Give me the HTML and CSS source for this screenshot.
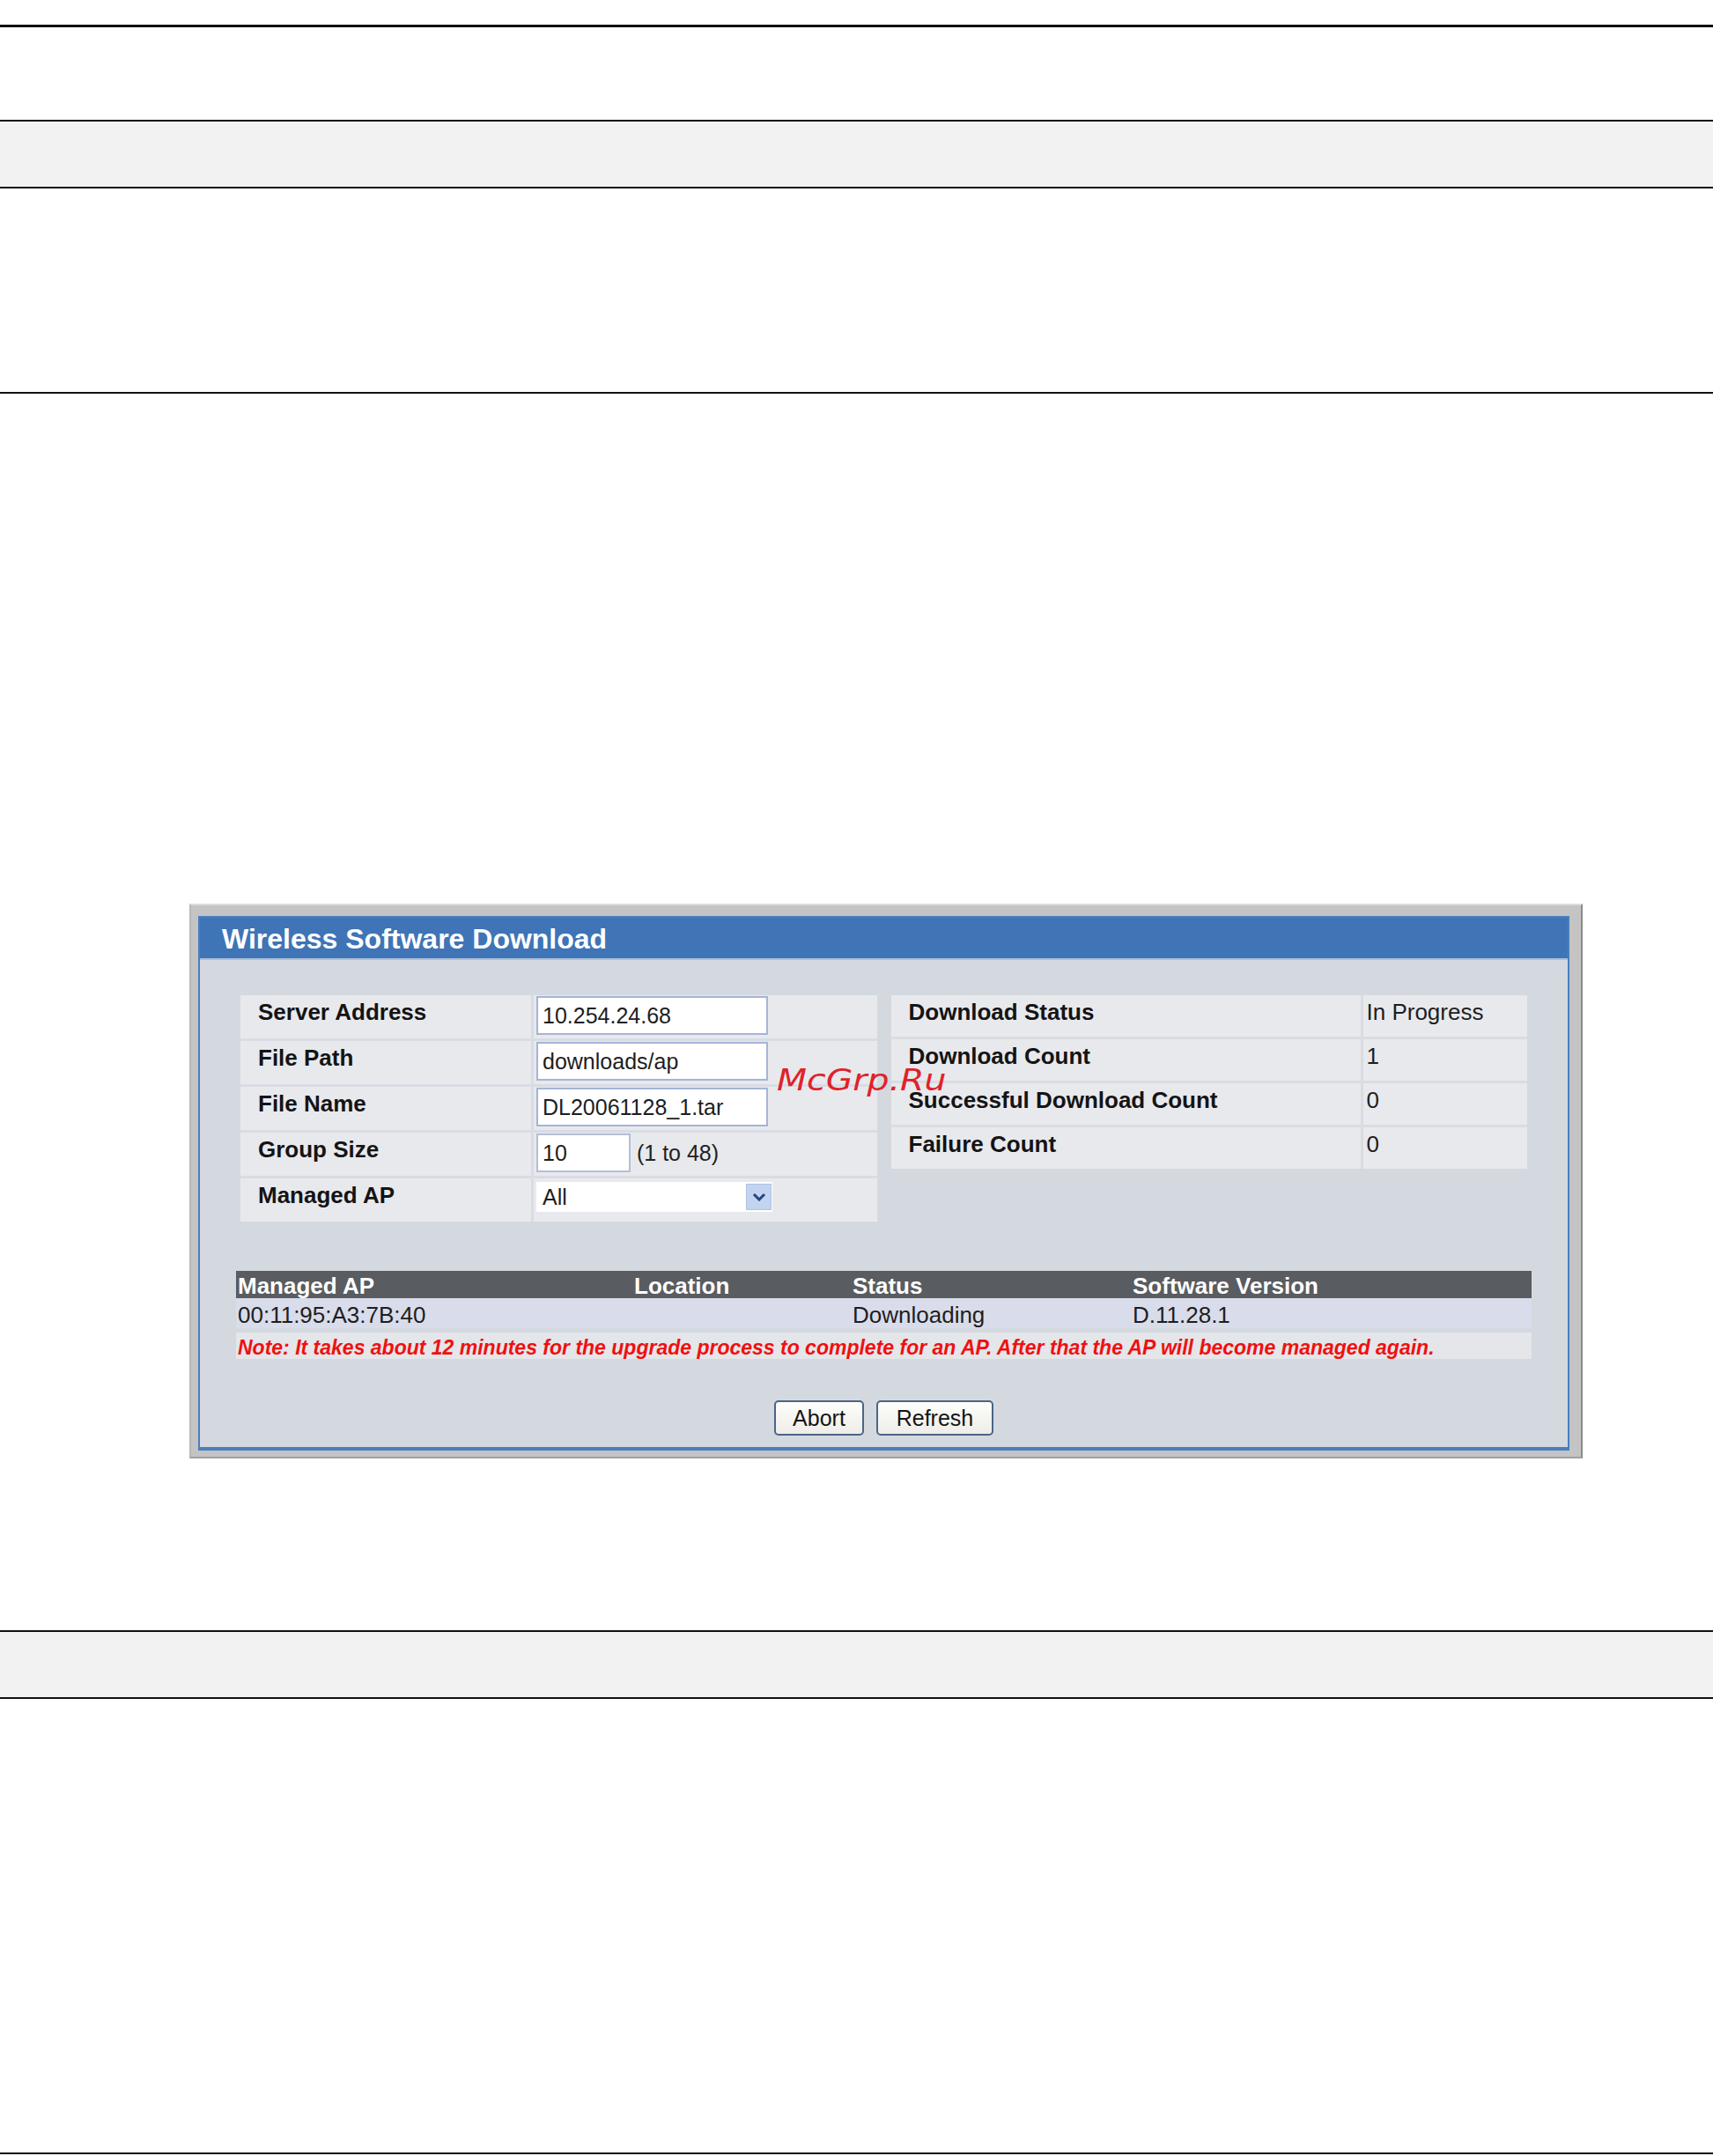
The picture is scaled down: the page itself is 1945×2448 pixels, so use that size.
FILE: index.html
```html
<!DOCTYPE html>
<html>
<head>
<meta charset="utf-8">
<title>Wireless Software Download</title>
<link rel="stylesheet" href="styles.css">
</head>
<body>
<div class="page">
  <div class="rule-thick"></div>
  <div class="band band-top"></div>
  <div class="rule rule-a"></div>

  <div class="figure">
    <div class="frame">
      <div class="panel">
        <div class="panel-head">Wireless Software Download</div>
        <div class="panel-body">
          <div class="top">
            <div class="kv kv-left">
              <div class="lbl">Server Address</div>
              <div class="val"><input class="txt" type="text" value="10.254.24.68"></div>
              <div class="lbl">File Path</div>
              <div class="val"><input class="txt" type="text" value="downloads/ap"></div>
              <div class="lbl">File Name</div>
              <div class="val"><input class="txt" type="text" value="DL20061128_1.tar"></div>
              <div class="lbl">Group Size</div>
              <div class="val val-row"><input class="txt txt-small" type="text" value="10"><span class="hint">(1 to 48)</span></div>
              <div class="lbl">Managed AP</div>
              <div class="val">
                <div class="select">
                  <span class="select-text">All</span>
                  <span class="select-btn"><svg width="16" height="10" viewBox="0 0 16 10"><polyline points="2,2 8,8 14,2" fill="none" stroke="#25457f" stroke-width="3"/></svg></span>
                </div>
              </div>
            </div>
            <div class="kv kv-right">
              <div class="lbl">Download Status</div>
              <div class="val val-text">In Progress</div>
              <div class="lbl">Download Count</div>
              <div class="val val-text">1</div>
              <div class="lbl">Successful Download Count</div>
              <div class="val val-text">0</div>
              <div class="lbl">Failure Count</div>
              <div class="val val-text">0</div>
            </div>
          </div>

          <div class="ap-table">
            <div class="ap-row ap-head">
              <div>Managed AP</div>
              <div>Location</div>
              <div>Status</div>
              <div>Software Version</div>
            </div>
            <div class="ap-row ap-data">
              <div>00:11:95:A3:7B:40</div>
              <div></div>
              <div>Downloading</div>
              <div>D.11.28.1</div>
            </div>
            <div class="ap-note">Note: It takes about 12 minutes for the upgrade process to complete for an AP. After that the AP will become managed again.</div>
          </div>

          <div class="actions">
            <button class="btn btn-abort" type="button">Abort</button>
            <button class="btn btn-refresh" type="button">Refresh</button>
          </div>
        </div>
      </div>
      <div class="watermark">McGrp.Ru</div>
    </div>
  </div>

  <div class="band band-bottom"></div>
  <div class="rule rule-b"></div>
</div>
</body>
</html>
```

FILE: styles.css
```css
* {
  box-sizing: border-box;
}

body {
  margin: 0;
  background: #ffffff;
  font-family: "Liberation Sans", Arial, sans-serif;
  color: #151515;
}

.page {
  width: 1945px;
}

.rule-thick {
  margin-top: 28px;
  height: 3px;
  background: #111111;
}

.band {
  height: 78px;
  background: #f2f2f2;
  border-top: 2px solid #111111;
  border-bottom: 2px solid #111111;
}

.band-top {
  margin-top: 105px;
}

.band-bottom {
  margin-top: 195px;
}

.rule {
  height: 2px;
  background: #111111;
}

.rule-a {
  margin-top: 231px;
}

.rule-b {
  margin-top: 515px;
}

/* ---------- screenshot figure ---------- */

.figure {
  margin-top: 579px;
  padding-left: 215px;
}

.frame {
  position: relative;
  width: 1582px;
  background: #c4c4c4;
  border: 2px solid;
  border-color: #dcdcdc #8a8a8a #a0a0a0 #b8b8b8;
  padding: 12px 13px 7px 8px;
}

.panel {
  border: 2px solid #4a7ebd;
  border-bottom-width: 4px;
  background: #d4d9e0;
}

.panel-head {
  height: 48px;
  line-height: 48px;
  background: #3f74b6;
  color: #ffffff;
  font-size: 32px;
  font-weight: bold;
  padding-left: 25px;
  border-bottom: 2px solid #a9bfdb;
}

.panel-body {
  padding: 40px 46px 13px;
}

.top {
  display: grid;
  grid-template-columns: 1fr 1fr;
  column-gap: 16px;
  align-items: start;
}

.kv {
  display: grid;
  gap: 3px;
  background: #d9dce2;
}

.kv-left {
  grid-template-columns: 330px 1fr;
  grid-auto-rows: 49px;
}

.kv-right {
  grid-template-columns: 533px 1fr;
  grid-auto-rows: 47px;
}

.lbl {
  background: #e8e9ed;
  font-size: 26px;
  font-weight: bold;
  line-height: 30px;
  padding: 4px 0 0 20px;
  color: #141414;
}

.val {
  background: #e8e9ed;
  padding: 1px 0 0 3px;
  font-size: 26px;
  color: #1e1e1e;
}

.val-text {
  line-height: 30px;
  padding: 4px 0 0 4px;
}

.val-row {
  display: flex;
  align-items: center;
  padding-top: 0;
  padding-bottom: 3px;
}

.txt {
  display: block;
  margin: 0;
  width: 263px;
  height: 44px;
  border: 2px solid #a5b4d7;
  background: #ffffff;
  padding: 0 0 0 5px;
  font-family: "Liberation Sans", Arial, sans-serif;
  font-size: 25px;
  color: #1e1e1e;
  outline: none;
}

.txt-small {
  width: 107px;
  border-color: #b2bfd9;
}

.hint {
  margin-left: 7px;
  font-size: 25px;
  color: #222222;
}

.select {
  margin-top: 3px;
  width: 268px;
  height: 34px;
  background: #ffffff;
  display: flex;
  align-items: center;
  justify-content: space-between;
  padding: 0 1px 0 7px;
}

.select-text {
  font-size: 25px;
  color: #1e1e1e;
}

.select-btn {
  width: 29px;
  height: 30px;
  background: #c3d4f1;
  border: 1px solid #adc2e6;
  display: flex;
  align-items: center;
  justify-content: center;
}

/* ---------- AP table ---------- */

.ap-table {
  margin: 56px -5px 0;
}

.ap-row {
  display: grid;
  grid-template-columns: 450px 248px 318px 1fr;
  font-size: 26px;
  line-height: 30px;
}

.ap-row > div {
  padding-left: 2px;
}

.ap-head {
  height: 31px;
  line-height: 34px;
  background: #595c60;
  color: #ffffff;
  font-weight: bold;
}

.ap-data {
  height: 34px;
  background: #d9dcea;
  color: #1e1e1e;
  padding-top: 4px;
}

.ap-note {
  margin-top: 5px;
  height: 30px;
  line-height: 34px;
  background: #e4e6ea;
  color: #f01010;
  font-size: 23px;
  font-weight: bold;
  font-style: italic;
  padding-left: 2px;
  white-space: nowrap;
}

/* ---------- buttons ---------- */

.actions {
  display: flex;
  justify-content: center;
  gap: 14px;
  margin-top: 47px;
}

.btn {
  height: 40px;
  margin: 0;
  padding: 0;
  border: 2px solid #4a6586;
  border-radius: 5px;
  background: linear-gradient(#fdfdfb, #eeede8);
  font-family: "Liberation Sans", Arial, sans-serif;
  font-size: 25px;
  color: #141414;
}

.btn-abort {
  width: 102px;
}

.btn-refresh {
  width: 133px;
}

/* ---------- watermark overlay ---------- */

.watermark {
  position: absolute;
  left: 665px;
  top: 181px;
  font-family: "DejaVu Sans", "Liberation Sans", sans-serif;
  font-style: italic;
  font-size: 34px;
  line-height: 34px;
  color: #e0222a;
  transform: scaleX(1.16);
  transform-origin: left center;
}
```
